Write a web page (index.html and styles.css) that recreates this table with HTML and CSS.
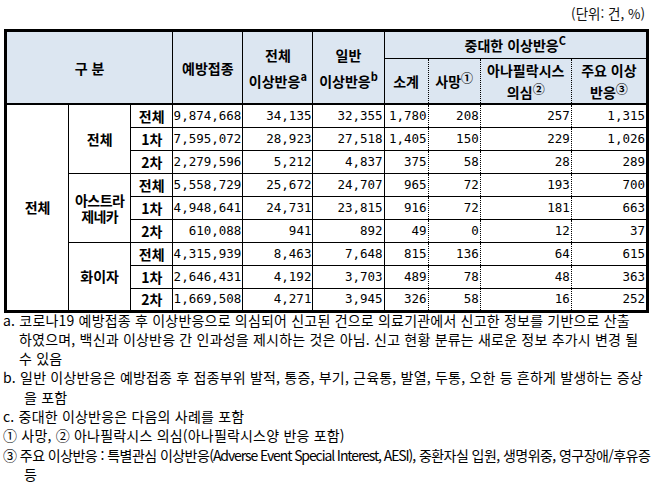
FILE: index.html
```html
<!DOCTYPE html>
<html lang="ko">
<head>
<meta charset="utf-8">
<title>코로나19 예방접종 후 이상반응 신고 현황</title>
<link rel="stylesheet" href="styles.css">
</head>
<body>
<div class="page">
  <div class="unit">(단위: 건, %)</div>
  <table class="stats">
    <colgroup>
      <col class="c1"><col class="c2"><col class="c3"><col class="c4"><col class="c5">
      <col class="c6"><col class="c7"><col class="c8"><col class="c9"><col class="c10">
    </colgroup>
    <thead>
      <tr class="hr1">
        <th colspan="3" rowspan="2">구 분</th>
        <th rowspan="2">예방접종</th>
        <th rowspan="2" class="two">전체<br>이상반응<sup>a</sup></th>
        <th rowspan="2" class="two">일반<br>이상반응<sup>b</sup></th>
        <th colspan="4" class="serious">중대한 이상반응<sup>C</sup></th>
      </tr>
      <tr class="hr2">
        <th class="dot">소계</th>
        <th class="dot">사망<sup class="circ">①</sup></th>
        <th class="dot two2">아나필락시스<br>의심<sup class="circ">②</sup></th>
        <th class="two2">주요 이상<br>반응<sup class="circ">③</sup></th>
      </tr>
    </thead>
    <tbody>
      <tr>
        <th rowspan="9" class="lbl">전체</th>
        <th rowspan="3" class="lbl">전체</th>
        <th class="lbl">전체</th>
        <td>9,874,668</td><td>34,135</td><td>32,355</td><td class="dot">1,780</td><td class="dot">208</td><td class="dot">257</td><td>1,315</td>
      </tr>
      <tr>
        <th class="lbl">1차</th>
        <td>7,595,072</td><td>28,923</td><td>27,518</td><td class="dot">1,405</td><td class="dot">150</td><td class="dot">229</td><td>1,026</td>
      </tr>
      <tr>
        <th class="lbl">2차</th>
        <td>2,279,596</td><td>5,212</td><td>4,837</td><td class="dot">375</td><td class="dot">58</td><td class="dot">28</td><td>289</td>
      </tr>
      <tr>
        <th rowspan="3" class="lbl tight">아스트라<br>제네카</th>
        <th class="lbl">전체</th>
        <td>5,558,729</td><td>25,672</td><td>24,707</td><td class="dot">965</td><td class="dot">72</td><td class="dot">193</td><td>700</td>
      </tr>
      <tr>
        <th class="lbl">1차</th>
        <td>4,948,641</td><td>24,731</td><td>23,815</td><td class="dot">916</td><td class="dot">72</td><td class="dot">181</td><td>663</td>
      </tr>
      <tr>
        <th class="lbl">2차</th>
        <td>610,088</td><td>941</td><td>892</td><td class="dot">49</td><td class="dot">0</td><td class="dot">12</td><td>37</td>
      </tr>
      <tr>
        <th rowspan="3" class="lbl">화이자</th>
        <th class="lbl">전체</th>
        <td>4,315,939</td><td>8,463</td><td>7,648</td><td class="dot">815</td><td class="dot">136</td><td class="dot">64</td><td>615</td>
      </tr>
      <tr>
        <th class="lbl">1차</th>
        <td>2,646,431</td><td>4,192</td><td>3,703</td><td class="dot">489</td><td class="dot">78</td><td class="dot">48</td><td>363</td>
      </tr>
      <tr>
        <th class="lbl">2차</th>
        <td>1,669,508</td><td>4,271</td><td>3,945</td><td class="dot">326</td><td class="dot">58</td><td class="dot">16</td><td>252</td>
      </tr>
    </tbody>
  </table>
  <div class="notes">
    <span class="ln">a. 코로나19 예방접종 후 이상반응으로 의심되어 신고된 건으로 의료기관에서 신고한 정보를 기반으로 산출</span>
    <span class="ln ind-a">하였으며, 백신과 이상반응 간 인과성을 제시하는 것은 아님. 신고 현황 분류는 새로운 정보 추가시 변경 될</span>
    <span class="ln ind-a">수 있음</span>
    <span class="ln">b. 일반 이상반응은 예방접종 후 접종부위 발적, 통증, 부기, 근육통, 발열, 두통, 오한 등 흔하게 발생하는 증상</span>
    <span class="ln ind-b">을 포함</span>
    <span class="ln">c. 중대한 이상반응은 다음의 사례를 포함</span>
    <span class="ln">① 사망, ② 아나필락시스 의심(아나필락시스양 반응 포함)</span>
    <span class="ln narrow">③ 주요 이상반응 : 특별관심 이상반응<span class="en">(Adverse Event Special Interest, AESI)</span>, 중환자실 입원, 생명위중, 영구장애/후유증</span>
    <span class="ln ind-b">등</span>
  </div>
</div>
</body>
</html>
```

FILE: styles.css
```css
html, body {
  margin: 0;
  padding: 0;
  background: #ffffff;
}

body {
  font-family: "Noto Sans CJK KR", "Noto Sans", sans-serif;
  color: #000;
}

.page {
  width: 658px;
  padding-left: 4px;
  box-sizing: border-box;
}

.unit {
  height: 29px;
  line-height: 27px;
  font-size: 13.5px;
  text-align: right;
  padding-right: 13px;
  color: #111;
}

.stats {
  border-collapse: collapse;
  table-layout: fixed;
  width: 645px;
  border: 3px solid #000;
}

.c1 { width: 63px; }
.c2 { width: 62px; }
.c3 { width: 42px; }
.c4 { width: 70px; }
.c5 { width: 70px; }
.c6 { width: 71px; }
.c7 { width: 44px; }
.c8 { width: 52px; }
.c9 { width: 91px; }
.c10 { width: 76px; }

.stats th,
.stats td {
  border-top: none;
  border-left: none;
  border-right: 1px solid #000;
  border-bottom: 1px solid #000;
  padding: 0;
  overflow: visible;
  white-space: nowrap;
}

.stats thead th {
  background: #dce6f1;
  font-size: 14px;
  font-weight: 700;
  line-height: 18px;
  text-align: center;
  vertical-align: middle;
}

.stats thead tr.hr2 th,
.stats thead th[rowspan] {
  border-bottom: 2px solid #000;
}

.stats thead th.serious {
  border-bottom: 1px solid #000;
}

.hr1 { height: 28px; }
.hr2 { height: 41px; }

.stats thead th.two {
  line-height: 26px;
}

.stats thead th.two2 {
  line-height: 22px;
  vertical-align: top;
}

.stats sup {
  font-size: 11px;
  line-height: 0;
  vertical-align: 6px;
  font-weight: 700;
}

.stats sup.circ {
  font-size: 12px;
  vertical-align: 4px;
}

.stats .dot {
  border-right: 1px dotted #000;
}

.stats tbody tr {
  height: 23px;
}

.stats tbody th.lbl {
  font-size: 14px;
  font-weight: 700;
  text-align: center;
  vertical-align: middle;
  line-height: 18px;
  background: #fff;
}

.stats tbody th.tight {
  line-height: 16px;
  letter-spacing: -0.6px;
}

.stats tbody td {
  font-family: "DejaVu Sans Mono", monospace;
  font-size: 12.5px;
  text-align: right;
  vertical-align: middle;
  padding-right: 1px;
  line-height: 18px;
}

.notes {
  margin-top: -2px;
  font-size: 14px;
  letter-spacing: 0.2px;
  line-height: 19.3px;
  margin-left: -1px;
}

.ln {
  display: block;
  white-space: nowrap;
}

.ind-a { padding-left: 16px; }
.ind-b { padding-left: 21px; }

.narrow {
  letter-spacing: -0.55px;
}

.narrow .en {
  letter-spacing: -1.1px;
}
```
